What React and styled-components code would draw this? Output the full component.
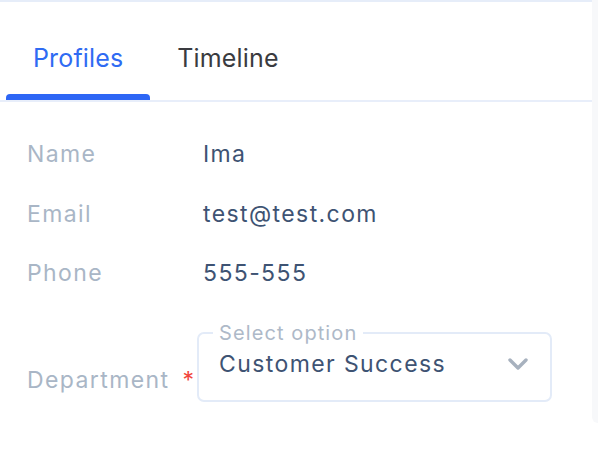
import React, { useState } from 'react';
import styled, { createGlobalStyle } from 'styled-components';

const GlobalStyle = createGlobalStyle`
  body {
    margin: 0;
    background: #ffffff;
    font-family: Inter, "Noto Sans", sans-serif;
  }
`;

const Page = styled.div`
  display: flex;
  width: 598px;
  height: 460px;
  align-items: flex-start;
`;

const Panel = styled.div`
  width: 592px;
  border-top: 2px solid #e6edf9;
`;

const SideStrip = styled.div`
  flex: 1;
  height: 423px;
  background: #f7f8fa;
  border-bottom-left-radius: 6px;
`;

const TabBar = styled.div`
  display: flex;
  height: 98px;
  padding-left: 6px;
  border-bottom: 2px solid #e8eefa;
`;

const Tab = styled.button`
  display: flex;
  flex-direction: column;
  justify-content: space-between;
  padding: 41px 0 0;
  border: 0;
  background: none;
  font-family: inherit;
  font-size: 25px;
  line-height: 30px;
  letter-spacing: 0.15px;
  color: ${({ $active }) => ($active ? '#2f6bf3' : '#3a3b40')};
  cursor: pointer;
`;

const TabLabel = styled.span`
  padding: 0 27px;
`;

const Indicator = styled.span`
  height: 6px;
  border-radius: 4px 4px 0 0;
  background: ${({ $active }) => ($active ? '#2d66f5' : 'transparent')};
`;

const Form = styled.div`
  display: grid;
  grid-template-columns: 176px 1fr;
  padding: 38px 0 0 27px;
  row-gap: 31.5px;
  align-items: end;
`;

const Label = styled.div`
  font-size: 23px;
  line-height: 28px;
  letter-spacing: 1.4px;
  color: #a9b6c6;
  margin-bottom: ${({ $bottom }) => $bottom || 0}px;
`;

const Required = styled.span`
  color: #f2453d;
  margin-left: 13px;
`;

const Value = styled.div`
  font-size: 23px;
  line-height: 28px;
  letter-spacing: 1.4px;
  color: #3e5373;
`;

const SelectBox = styled.fieldset`
  width: 355px;
  height: 79px;
  box-sizing: border-box;
  margin: 4px 0 0 -6px;
  padding: 0 21px 14px 20px;
  border: 2px solid #e3ebf8;
  border-radius: 7px;
  display: flex;
  align-items: center;
  justify-content: space-between;
  cursor: pointer;
`;

const Legend = styled.legend`
  margin-left: -6px;
  padding: 0 6px;
  font-size: 20px;
  line-height: 20px;
  letter-spacing: 1.1px;
  color: #aeb9c8;
`;

const SelectValue = styled.span`
  font-size: 23px;
  line-height: 28px;
  letter-spacing: 1.4px;
  color: #3e5373;
`;

const Chevron = styled.svg`
  width: 22px;
  height: 14px;
`;

const fields = [
  { label: 'Name', value: 'Ima' },
  { label: 'Email', value: 'test@test.com' },
  { label: 'Phone', value: '555-555' },
];

const App = () => {
  const [tab, setTab] = useState('profiles');

  return (
    <>
      <GlobalStyle />
      <Page>
        <Panel>
          <TabBar>
            <Tab $active={tab === 'profiles'} onClick={() => setTab('profiles')}>
              <TabLabel>Profiles</TabLabel>
              <Indicator $active={tab === 'profiles'} />
            </Tab>
            <Tab $active={tab === 'timeline'} onClick={() => setTab('timeline')}>
              <TabLabel>Timeline</TabLabel>
              <Indicator $active={tab === 'timeline'} />
            </Tab>
          </TabBar>
          <Form>
            {fields.map((f) => (
              <React.Fragment key={f.label}>
                <Label>{f.label}</Label>
                <Value>{f.value}</Value>
              </React.Fragment>
            ))}
            <Label $bottom={8}>
              Department<Required>*</Required>
            </Label>
            <SelectBox>
              <Legend>Select option</Legend>
              <SelectValue>Customer Success</SelectValue>
              <Chevron viewBox="0 0 22 14" fill="none">
                <path
                  d="M3 3 L11 11 L19 3"
                  stroke="#a7b1be"
                  strokeWidth="3.4"
                  strokeLinecap="round"
                  strokeLinejoin="round"
                />
              </Chevron>
            </SelectBox>
          </Form>
        </Panel>
        <SideStrip />
      </Page>
    </>
  );
};

export default App;
